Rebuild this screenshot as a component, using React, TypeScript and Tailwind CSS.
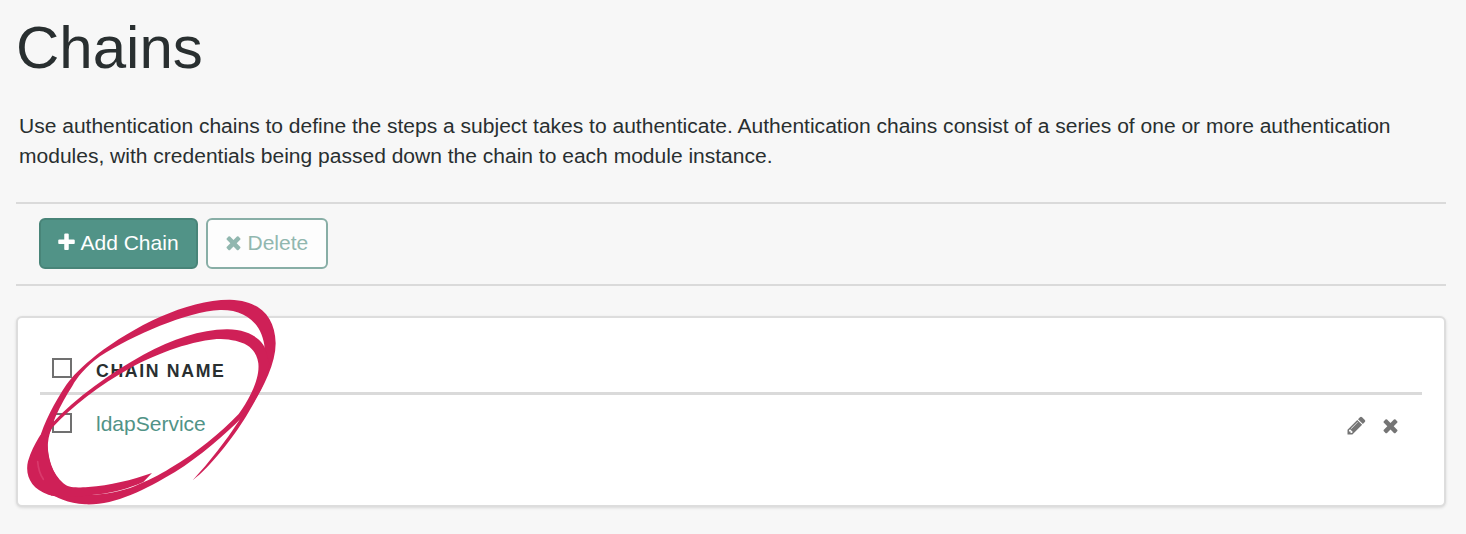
import React from "react";

const PLUS =
  "M1600 736v192q0 40-28 68t-68 28h-416v416q0 40-28 68t-68 28h-192q-40 0-68-28t-28-68v-416h-416q-40 0-68-28t-28-68v-192q0-40 28-68t68-28h416v-416q0-40 28-68t68-28h192q40 0 68 28t28 68v416h416q40 0 68 28t28 68z";
const TIMES =
  "M1490 1322q0 40-28 68l-136 136q-28 28-68 28t-68-28l-294-294-294 294q-28 28-68 28t-68-28l-136-136q-28-28-28-68t28-68l294-294-294-294q-28-28-28-68t28-68l136-136q28-28 68-28t68 28l294 294 294-294q28-28 68-28t68 28l136 136q28 28 28 68t-28 68l-294 294 294 294q28 28 28 68z";
const PENCIL =
  "M491 1536l91-91-235-235-91 91v107h128v128h107zm523-928q0-22-22-22-10 0-17 7l-542 542q-7 7-7 17 0 22 22 22 10 0 17-7l542-542q7-7 7-17zm-54-192l416 416-832 832h-416v-416zm683 96q0 53-37 90l-166 166-416-416 166-165q36-38 90-38 53 0 91 38l235 234q37 39 37 91z";

function Icon({ d, className = "" }: { d: string; className?: string }) {
  return (
    <svg viewBox="0 0 1792 1792" fill="currentColor" aria-hidden="true" className={`size-[21px] shrink-0 ${className}`}>
      <path d={d} />
    </svg>
  );
}

function Checkbox({ label }: { label: string }) {
  return (
    <input
      type="checkbox"
      aria-label={label}
      className="block size-5 shrink-0 appearance-none border-2 border-[#707070] bg-white"
    />
  );
}

function Scribble() {
  return (
    <svg
      viewBox="0 0 900 675"
      fill="#cf2057"
      aria-hidden="true"
      className="pointer-events-none absolute top-[290px] left-0 h-[225px] w-[300px] blur-[0.5px]"
    >
      {/* outer loop, from the right-hand tail over the top and down the left */}
      <path d="M578 571 C630 530 695 450 739 378 C779 310 827 230 827 160 C825 80 780 32 690 29 C560 28 400 110 290 194 C245 230 218 258 199 284 C165 335 130 400 118 450 C100 520 120 590 155 617 L204 597 C165 565 143 520 143 465 C148 410 180 345 217 288 C232 262 255 232 300 199 C400 135 560 65 660 60 C730 58 783 95 793 165 C795 240 765 310 716 394 C676 455 630 515 578 571 Z" />
      {/* inner loop, across the heading and back under the row */}
      <path d="M155 401 C230 320 330 250 430 194 C520 146 600 120 680 118 C740 117 785 145 795 175 L808 220 C795 290 765 335 728 380 C675 434 600 499 525 546 C430 603 340 647 255 643 C205 640 165 622 145 605 L200 600 C250 625 340 614 405 588 C440 574 480 554 510 535 C590 488 660 430 716 372 C750 325 780 265 775 220 C768 165 720 147 650 147 C560 155 450 200 390 235 C300 285 215 350 158 412 Z" />
      {/* lower-left bulge and its short tail */}
      <path d="M158 398 C145 411 125 428 116 443 C105 462 92 485 84 514 C74 555 93 597 145 614 C185 627 250 618 310 611 C365 603 405 587 430 576 L456 549 C395 570 330 587 265 591 C225 594 205 593 190 580 C155 550 140 500 143 440 L160 407 Z" />
      <path d="M113 515 C115 540 122 556 130 568" fill="none" stroke="#d93a6c" strokeWidth="5" strokeLinecap="round" />
    </svg>
  );
}

export default function App() {
  return (
    <main className="relative h-[534px] w-[1466px] overflow-hidden bg-[#f7f7f7] pr-5 pl-4 font-['Liberation_Sans',Arial,sans-serif] text-[#292f30]">
      <h1 className="h-[111px] pt-[14px] text-[60px] leading-[68px]">Chains</h1>
      <p className="h-[91px] pl-[3px] text-[21.03px] leading-[30px] whitespace-nowrap">
        Use authentication chains to define the steps a subject takes to authenticate. Authentication chains consist of a series of one or more authentication
        <br />
        modules, with credentials being passed down the chain to each module instance.
      </p>

      <div className="flex h-[84px] items-start gap-2 border-y-2 border-[#dadada] pt-[14px] pl-[23px] text-[21px]">
        <button className="flex h-[51px] w-[159px] items-center rounded-md border-2 border-[#488478] bg-[#519387] pb-[2px] pl-[15px] whitespace-nowrap text-white">
          <Icon d={PLUS} className="mr-[3.5px]" />
          Add Chain
        </button>
        <button className="flex h-[51px] w-[122px] items-center rounded-md border-2 border-[#88aea6] bg-[#fdfdfd] pb-[2px] pl-[15px] whitespace-nowrap text-[#91b7af]">
          <Icon d={TIMES} className="mr-[3.5px]" />
          Delete
        </button>
      </div>

      <section className="mt-[30px] h-[191px] rounded-md border-2 border-[#dddddd] bg-white px-[22px] pt-[22px] shadow-[0_1px_3px_rgba(0,0,0,0.12)]">
        <div className="flex h-[55px] items-start border-b-3 border-[#dadada] pt-[18px] pl-3">
          <Checkbox label="Select all" />
          <span className="ml-6 pt-[3px] text-[17.7px] leading-5 font-bold tracking-[1.65px]">CHAIN NAME</span>
        </div>
        <div className="flex items-start pt-[18px] pl-3">
          <Checkbox label="Select ldapService" />
          <a className="ml-6 text-[21px] leading-[22px] text-[#519387]">ldapService</a>
          <div className="mt-[2px] mr-[21px] ml-auto flex gap-[13px] text-[#757575]">
            <Icon d={PENCIL} />
            <Icon d={TIMES} />
          </div>
        </div>
      </section>

      <Scribble />
    </main>
  );
}
